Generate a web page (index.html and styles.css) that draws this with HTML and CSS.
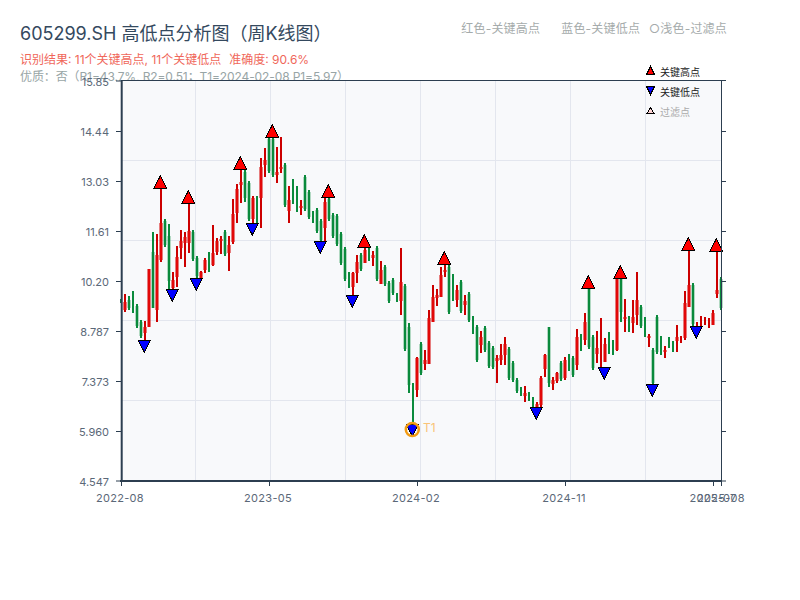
FILE: index.html
```html
<!DOCTYPE html>
<html lang="zh">
<head>
<meta charset="utf-8">
<title>605299.SH 高低点分析图</title>
<link rel="stylesheet" href="styles.css">
</head>
<body>
<div class="page">
  <header class="head">
    <div class="head-top">
      <h1 class="title">605299.SH 高低点分析图（周K线图）</h1>
      <div class="hints">
        <span class="hint">红色-关键高点</span>
        <span class="hint hint-blue">蓝色-关键低点</span>
        <span class="hint hint-light">○浅色-过滤点</span>
      </div>
    </div>
    <p class="result">识别结果: 11个关键高点, 11个关键低点<span class="gap"></span>准确度: 90.6%</p>
    <p class="quality">优质：否（R1=43.7%,&nbsp;R2=0.51；T1=2024-02-08 P1=5.97）</p>
  </header>
  <svg class="chart" width="800" height="520" viewBox="0 60 800 520">
    <defs>
      <path id="up" d="M0 -12L6.3 0H-6.3Z"/>
      <path id="down" d="M0 12L6.3 0H-6.3Z"/>
      <path id="red-bodies" d="M125 302V310M145 327V333M149 269V327M157 255V310M161 223V260M173 280V288M177 257V277M181 241V248M185 237V243M189 231V243M201 272V278M205 260V270M213 253V265M217 241V252M221 239V241M229 245V253M233 214V242M237 189V213M241 182V185M253 198V219M261 167V198M265 160V165M277 172V175M281 167V169M289 200V211M301 206V208M325 202V228M353 273V287M357 262V273M365 250V263M373 255V258M381 270V284M401 282V301M417 358V390M425 360V364M429 318V364M433 297V322M437 295V298M441 275V297M445 270V272M457 290V300M465 301V305M481 337V345M497 358V361M501 355V360M505 344V355M525 393V396M537 404V408M541 378V405M545 355V369M553 380V384M557 373V381M565 360V378M577 337V365M585 322V340M597 348V354M605 344V362M617 278V350M625 317V319M633 317V323M637 300V315M649 336V338M665 350V352M677 337V341M685 303V338M689 285V307M713 313V325M717 290V294"/>
    </defs>
    <rect class="plot" x="121" y="81" width="600" height="400"/>
    <path class="grid" d="M121 160.5H721M121 240.5H721M121 320.5H721M121 400.5H721M195.500 81V481M270.500 81V481M345.500 81V481M420.500 81V481M495.500 81V481M570.500 81V481M645.500 81V481"/>

    <path class="wick-green" d="M121 299V303M129 296V310M133 291V313M137 304V328M141 320V338M153 232V308M165 219V247M169 224V290M193 230V261M197 256V278M209 252V272M225 230V256M245 170V202M249 181V221M257 196V223M269 137V173M273 137V177M285 163V207M293 179V204M297 186V212M305 175V211M309 190V219M313 211V223M317 208V233M321 219V242M329 197V221M333 213V238M337 214V246M341 232V265M345 247V281M349 272V288M361 253V271M369 247V261M377 246V281M385 265V286M389 281V303M393 278V295M397 293V302M405 284V351M409 323V393M413 383V426M421 342V375M449 265V314M453 274V301M461 280V313M469 292V322M473 316V334M477 325V362M485 326V352M489 341V368M493 346V369M509 347V380M513 361V382M517 378V393M521 387V396M529 392V401M533 397V408M549 327V387M561 361V381M569 354V371M573 356V377M581 334V351M589 287V349M593 335V370M609 332V354M613 340V355M621 277V322M629 316V332M641 305V328M645 317V337M653 348V385M657 315V354M661 336V355M669 337V348M673 341V352M693 283V326M721 277V310"/>
    <path class="body-green" d="M129 300V308M137 306V326M141 322V336M153 252V308M165 221V245M169 236V281M193 232V259M197 258V276M225 232V254M245 172V198M249 183V219M269 139V171M273 139V175M285 165V205M305 177V209M309 192V217M317 210V231M321 221V240M329 199V219M333 215V236M337 216V244M341 234V263M345 249V279M361 255V269M377 248V279M385 267V284M389 283V301M393 280V293M405 286V349M409 327V385M421 344V373M449 267V312M461 282V311M469 294V320M477 327V360M485 328V350M489 343V366M493 348V367M509 349V378M513 363V380M517 380V391M549 327V383M561 363V379M573 358V375M589 289V347M593 337V368M621 277V312M641 307V326M653 350V383M657 317V352M693 285V324M721 279V308"/>

    <path class="wick-red" d="M125 294V312M145 321V340M149 269V327M157 234V322M161 187V262M173 272V290M177 246V287M181 230V259M185 232V267M189 202V253M201 271V278M205 258V273M213 225V266M217 238V255M221 236V254M229 236V271M233 199V244M237 184V223M241 170V203M253 196V223M261 158V228M265 148V177M277 147V183M281 137V173M289 186V223M301 200V215M325 197V242M353 272V295M357 255V283M365 247V263M373 251V266M381 261V284M401 248V315M417 357V397M425 350V370M429 310V364M433 285V322M437 289V306M441 267V297M445 257V277M457 285V307M465 295V315M481 331V353M497 355V383M501 344V365M505 337V365M525 386V402M537 402V408M541 376V407M545 354V377M553 377V390M557 372V383M565 357V380M577 329V370M585 313V345M597 331V363M601 318V367M605 338V362M617 277V351M625 299V332M633 300V333M637 272V325M649 334V347M665 346V358M677 325V352M681 336V343M685 291V340M689 250V307M697 322V328M701 316V327M705 317V325M709 318V328M713 310V325M717 250V298"/>
    <use href="#red-bodies" class="body-red-edge"/>
    <use href="#red-bodies" class="body-red-core"/>

    <g class="marks">
      <use href="#up" x="160.300" y="188"/>
      <use href="#up" x="188.300" y="203"/>
      <use href="#up" x="240.300" y="169"/>
      <use href="#up" x="272.300" y="137"/>
      <use href="#up" x="328.300" y="197"/>
      <use href="#up" x="364.300" y="247"/>
      <use href="#up" x="444.300" y="264"/>
      <use href="#up" x="588.300" y="288"/>
      <use href="#up" x="620.300" y="278"/>
      <use href="#up" x="688.300" y="250"/>
      <use href="#up" x="716.300" y="251"/>
    </g>
    <g class="marks marks-low">
      <use href="#down" x="144.300" y="340"/>
      <use href="#down" x="172.300" y="289"/>
      <use href="#down" x="196.300" y="278"/>
      <use href="#down" x="252.300" y="223"/>
      <use href="#down" x="320.300" y="241"/>
      <use href="#down" x="352.300" y="295"/>
      <use href="#down" x="412.300" y="424"/>
      <use href="#down" x="536.300" y="407"/>
      <use href="#down" x="604.300" y="367"/>
      <use href="#down" x="652.300" y="384"/>
      <use href="#down" x="696.300" y="326"/>
    </g>
    <circle class="t1-ring" cx="412.300" cy="429.500" r="6.500"/>
    <text class="t1-label" x="423" y="432">T1</text>

    <path class="axis-thick" d="M121.700 80V482M120 481H722"/>
    <path class="axis" d="M121 80.500H726M721.500 80V481M116 81H121M116 131.500H121M116 181.500H121M116 231.500H121M116 281.500H121M116 331.500H121M116 381.500H121M116 431.500H121M116 481H121M721 131.500H726M721 181.500H726M721 231.500H726M721 281.500H726M721 331.500H726M721 381.500H726M721 431.500H726M721 481H726M121.500 481V486M269.500 481V486M417.500 481V486M565.500 481V486M713.500 481V486M721.500 481V486"/>

    <g class="y-labels">
      <text x="109" y="86">15.85</text>
      <text x="109" y="136">14.44</text>
      <text x="109" y="186">13.03</text>
      <text x="109" y="236">11.61</text>
      <text x="109" y="286">10.20</text>
      <text x="109" y="336">8.787</text>
      <text x="109" y="386">7.373</text>
      <text x="109" y="436">5.960</text>
      <text x="109" y="486">4.547</text>
    </g>
    <g class="x-labels">
      <text x="120" y="502">2022-08</text>
      <text x="268" y="502">2023-05</text>
      <text x="416" y="502">2024-02</text>
      <text x="564" y="502">2024-11</text>
      <text x="713" y="502">2025-07</text>
      <text x="721" y="502">2025-08</text>
    </g>

    <g class="key">
      <path class="key-up" d="M650.500 66.500L654.500 74.500H646.500Z"/>
      <path class="key-down" d="M650.500 94.500L654.500 86.500H646.500Z"/>
      <path class="key-light" d="M650.500 107.500L654 113.500H647Z"/>
      <text x="660" y="76">关键高点</text>
      <text x="660" y="96">关键低点</text>
      <text class="key-muted" x="660" y="116">过滤点</text>
    </g>
  </svg>
</div>
</body>
</html>
```
FILE: styles.css
```css
* { box-sizing: border-box; }
html, body { margin: 0; padding: 0; background: #fff; }
body { font-family: "Inter", "Noto Sans CJK SC", sans-serif; }
.page { width: 800px; height: 600px; overflow: hidden; }
.head { height: 60px; padding: 22px 0 0 20px; }
.head-top { display: flex; justify-content: space-between; align-items: flex-start; padding-right: 73px; height: 29px; }
.title { margin: 0; font-size: 18px; font-weight: 400; line-height: 24px; color: #34495e; white-space: nowrap; }
.hints { display: flex; font-size: 12px; line-height: 14px; letter-spacing: 0.2px; color: #a5abab; white-space: nowrap; }
.hint-blue { margin-left: 21px; }
.hint-light { margin-left: 9px; }
.result, .quality { margin: 0; font-size: 12px; line-height: 17px; white-space: nowrap; }
.result { color: #f0675a; }
.gap { display: inline-block; width: 8px; }
.quality { color: #98a5a6; letter-spacing: -0.1px; font-family: "Inter", "Noto Sans CJK TC", sans-serif; }
.chart { display: block; overflow: visible; position: relative; }
.plot { fill: #f8f9fb; }
.grid { fill: none; stroke: #e3e6ee; stroke-width: 1; }
.wick-green, .body-green, .wick-red, .body-red-edge, .body-red-core { fill: none; }
.wick-green { stroke: #0a8a3c; stroke-width: 2; }
.body-green { stroke: #0a8a3c; stroke-width: 2.6; }
.wick-red { stroke: #cc0000; stroke-width: 2; }
.body-red-edge { stroke: #d40000; stroke-width: 3; }
.body-red-core { stroke: #f01010; stroke-width: 1; }
.marks { fill: #f00; stroke: #000; stroke-width: 1; shape-rendering: crispEdges; }
.marks-low { fill: #00f; }
.t1-ring { fill: none; stroke: #f39c12; stroke-width: 2.5; }
.t1-label { font-size: 12px; fill: #f9c377; }
.axis-thick { fill: none; stroke: #2c3e50; stroke-width: 2; }
.axis { fill: none; stroke: #2c3e50; stroke-width: 1; }
.y-labels text { font-size: 11px; fill: #5b6878; text-anchor: end; }
.x-labels text { font-size: 11px; letter-spacing: 0.3px; fill: #5b6878; text-anchor: middle; }
.key text { font-size: 10px; fill: #222; }
.key .key-muted { fill: #aaa; }
.key-up { fill: #f00; stroke: #000; shape-rendering: crispEdges; }
.key-down { fill: #00f; stroke: #000; shape-rendering: crispEdges; }
.key-light { fill: #ffd5d5; stroke: #000; shape-rendering: crispEdges; }
```
